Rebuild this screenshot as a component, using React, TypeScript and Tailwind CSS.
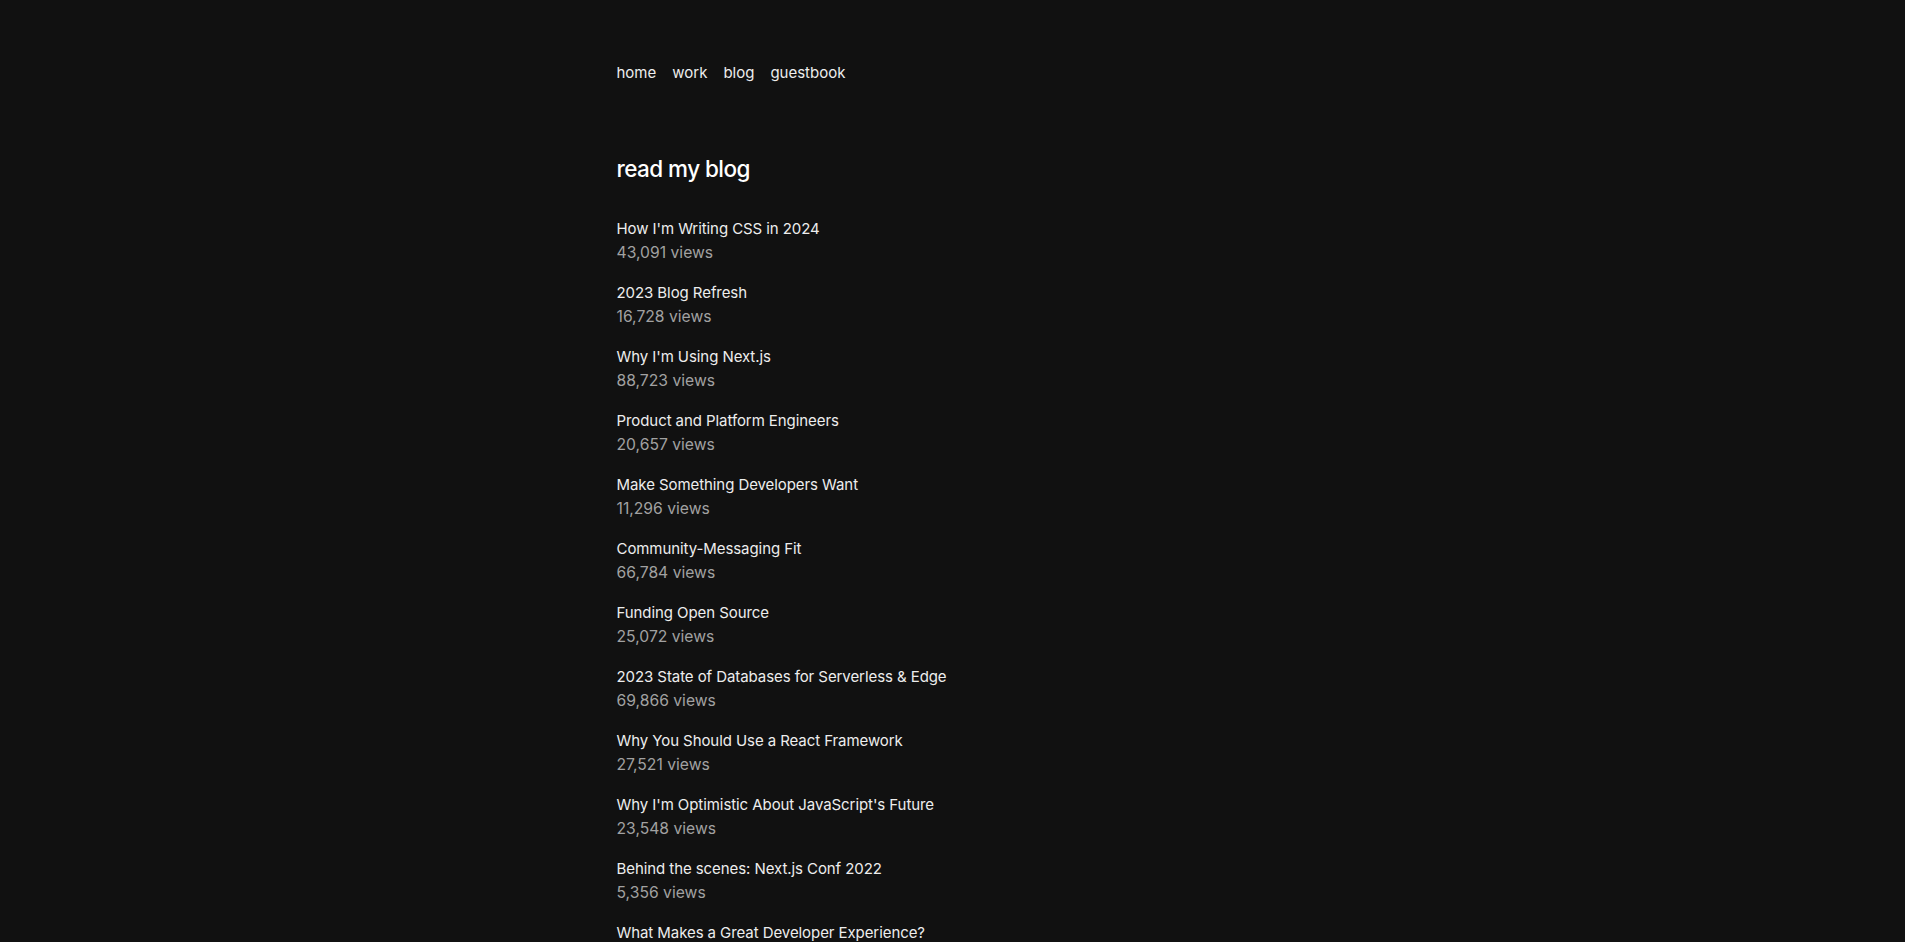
import React from 'react';

const posts = [
  { title: "How I'm Writing CSS in 2024", views: '43,091' },
  { title: '2023 Blog Refresh', views: '16,728' },
  { title: "Why I'm Using Next.js", views: '88,723' },
  { title: 'Product and Platform Engineers', views: '20,657' },
  { title: 'Make Something Developers Want', views: '11,296' },
  { title: 'Community-Messaging Fit', views: '66,784' },
  { title: 'Funding Open Source', views: '25,072' },
  { title: '2023 State of Databases for Serverless & Edge', views: '69,866' },
  { title: 'Why You Should Use a React Framework', views: '27,521' },
  { title: "Why I'm Optimistic About JavaScript's Future", views: '23,548' },
  { title: 'Behind the scenes: Next.js Conf 2022', views: '5,356' },
  { title: 'What Makes a Great Developer Experience?', views: '31,204' },
  { title: 'Building a Developer Community', views: '18,441' },
];

const links = ['home', 'work', 'blog', 'guestbook'];

export default function App() {
  return (
    <div className="min-h-screen bg-[#111111] text-[#ededed] font-['Inter',sans-serif] antialiased">
      <main className="max-w-2xl mx-auto pt-[61px]">
        <nav className="flex flex-row -ml-2 mb-[68px]">
          {links.map((l) => (
            <a key={l} href="#" className="px-2 text-[15px] leading-6 text-[#ededed]">
              {l}
            </a>
          ))}
        </nav>
        <h1 className="text-[22.5px] leading-8 font-medium tracking-tight mb-8 text-white">read my blog</h1>
        <div>
          {posts.map((p) => (
            <a key={p.title} href="#" className="flex flex-col mb-4">
              <p className="text-[15px] leading-6 tracking-[-0.005em] text-[#ededed]">{p.title}</p>
              <p className="text-[15.7px] leading-6 text-[#a1a1a1]">{p.views} views</p>
            </a>
          ))}
        </div>
      </main>
    </div>
  );
}
